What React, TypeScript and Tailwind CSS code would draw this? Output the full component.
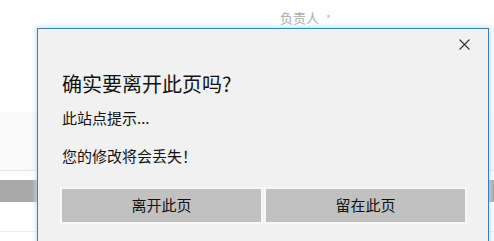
import React from "react";

export default function App() {
  const font = { fontFamily: '"Noto Sans CJK SC", "Noto Sans", sans-serif' };
  return (
    <div className="relative w-[494px] h-[241px] overflow-hidden bg-white" style={font}>
      {/* background page */}
      <div className="flex flex-col">
        <div className="h-[112px] bg-white relative">
          <div className="flex items-start pl-[280px] pt-[9px] text-[13px] leading-[18px] text-[#aaaaaa]">
            <span>负责人</span>
            <span className="ml-[7px] text-[#f4a9b8] text-[11px]">*</span>
          </div>
        </div>
        <div className="h-[58px] bg-[#f9f9f9]" />
        <div className="h-[1px] bg-[#e6e6e6]" />
        <div className="h-[9px] bg-white" />
        <div className="h-[22px] bg-[#a8a8a8]" />
        <div className="h-[29px] bg-white" />
        <div className="h-[1px] bg-[#ececec]" />
        <div className="h-[20px] bg-white" />
      </div>

      {/* dialog */}
      <div className="absolute left-[37px] top-[28px] w-[452px] h-[260px] bg-[#f1f1f1] border border-[#3f7cb3] shadow-[0_0_4px_2px_rgba(190,225,245,0.7)]">
        <div className="flex justify-end pr-[18px] pt-[10px] h-[22px]">
          <svg width="11" height="11" viewBox="0 0 11 11" className="text-[#333]">
            <path d="M0.5 0.5 L10.5 10.5 M10.5 0.5 L0.5 10.5" stroke="currentColor" strokeWidth="1.1" fill="none" />
          </svg>
        </div>
        <div className="pl-[24px] pt-[19px]">
          <div className="text-[20px] leading-[28px] text-[#111]">确实要离开此页吗?</div>
          <div className="mt-[10px] text-[15px] leading-[20px] text-[#111]">此站点提示...</div>
          <div className="mt-[18px] text-[15px] leading-[20px] text-[#111]">您的修改将会丢失！</div>
          <div className="mt-[23px] flex gap-[5px]">
            <div className="w-[199px] h-[33px] bg-[#c1c1c1] ring-2 ring-[#f8f8f8] flex items-center justify-center text-[15px] text-[#111]">
              离开此页
            </div>
            <div className="w-[199px] h-[33px] bg-[#c1c1c1] ring-2 ring-[#f8f8f8] flex items-center justify-center text-[15px] text-[#111]">
              留在此页
            </div>
          </div>
        </div>
      </div>
    </div>
  );
}
